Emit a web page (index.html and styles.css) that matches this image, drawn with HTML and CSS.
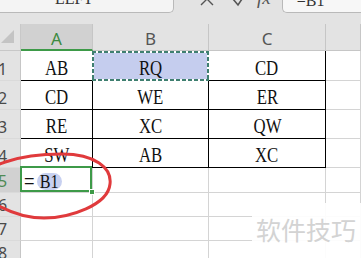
FILE: index.html
```html
<!DOCTYPE html>
<html lang="zh">
<head>
    <meta charset="UTF-8">
    <title>表格</title>
    <link rel="stylesheet" href="styles.css">
</head>
<body>
    <div class="formula-bar">
        <div class="name-box">LEFT</div>
        <svg class="ico-x" width="14" height="14" viewBox="0 0 14 14">
            <path d="M1 1 L13 13 M13 1 L1 13" stroke="#555" stroke-width="1.4" fill="none"/>
        </svg>
        <svg class="ico-ok" width="13" height="12" viewBox="0 0 13 12">
            <path d="M1 4 L6 10 L12 1" stroke="#555" stroke-width="1.6" fill="none"/>
        </svg>
        <span class="fx">fx</span>
        <div class="formula-input">=B1</div>
    </div>

    <div class="sheet">
        <div class="corner">
            <svg width="14" height="14" viewBox="0 0 14 14"><path d="M13 0 L13 13 L0 13 Z" fill="#c4c4c4"/></svg>
        </div>
        <div class="col-head active">A</div>
        <div class="col-head">B</div>
        <div class="col-head">C</div>
        <div class="col-head"></div>

        <div class="row-head"><span>1</span></div>
        <div class="cell data"><span>AB</span></div>
        <div class="cell data copy"><span>RQ</span></div>
        <div class="cell data"><span>CD</span></div>
        <div class="cell"></div>

        <div class="row-head"><span>2</span></div>
        <div class="cell data"><span>CD</span></div>
        <div class="cell data"><span>WE</span></div>
        <div class="cell data"><span>ER</span></div>
        <div class="cell"></div>

        <div class="row-head"><span>3</span></div>
        <div class="cell data"><span>RE</span></div>
        <div class="cell data"><span>XC</span></div>
        <div class="cell data"><span>QW</span></div>
        <div class="cell"></div>

        <div class="row-head"><span>4</span></div>
        <div class="cell data"><span>SW</span></div>
        <div class="cell data"><span>AB</span></div>
        <div class="cell data"><span>XC</span></div>
        <div class="cell"></div>

        <div class="row-head active"><span>5</span></div>
        <div class="cell editing">
            <span class="eq">=</span>
            <span class="ref"><span>B1</span></span>
        </div>
        <div class="cell"></div>
        <div class="cell"></div>
        <div class="cell"></div>

        <div class="row-head"><span>6</span></div>
        <div class="cell"></div>
        <div class="cell"></div>
        <div class="cell"></div>
        <div class="cell"></div>

        <div class="row-head"><span>7</span></div>
        <div class="cell"></div>
        <div class="cell"></div>
        <div class="cell"></div>
        <div class="cell"></div>

        <div class="row-head"><span>8</span></div>
        <div class="cell"></div>
        <div class="cell"></div>
        <div class="cell"></div>
        <div class="cell"></div>
    </div>

    <!-- 红色圈注 -->
    <svg class="mark" width="361" height="258" viewBox="0 0 361 258">
        <path d="M-20 185 C-20 165 20 154 62 154 C95 154 112 168 110 184 C108 205 70 218 44 218 C15 218 -20 200 -20 185 Z"
              fill="none" stroke="#e03a3c" stroke-width="3"/>
    </svg>

    <div class="watermark">软件技巧</div>
</body>
</html>
```

FILE: styles.css
```css
body {
    margin: 0;
    width: 361px;
    height: 258px;
    overflow: hidden;
    position: relative;
    background-color: #fff;
    font-family: "Noto Sans", "Liberation Sans", sans-serif;
}

/* 编辑栏 */
.formula-bar {
    display: flex;
    align-items: flex-start;
    height: 24px;
    overflow: hidden;
    background-color: #e3e3e3;
}
.name-box {
    box-sizing: border-box;
    width: 174px;
    height: 29px;
    margin-top: -16px;
    padding: 0 25px 5px 0;
    display: flex;
    align-items: flex-end;
    justify-content: center;
    background-color: #f4f4f4;
    border: 1px solid #b9b9b9;
    border-top: none;
    border-left: none;
    border-bottom-right-radius: 5px;
    font: 16px/16px "Liberation Serif", serif;
    color: #333;
}
.ico-x {
    margin: -8px 0 0 26px;
}
.ico-ok {
    margin: -5px 0 0 18px;
}
.fx {
    margin: -12px 0 0 12px;
    font: italic 19px/19px "Liberation Serif", serif;
    color: #555;
}
.formula-input {
    box-sizing: border-box;
    flex: 1;
    height: 29px;
    margin: -16px 0 0 11px;
    padding: 0 0 3px 14px;
    display: flex;
    align-items: flex-end;
    background-color: #f7f7f7;
    border: 1px solid #b9b9b9;
    border-top: none;
    border-right: none;
    border-bottom-left-radius: 5px;
    font: 16px/16px "Liberation Serif", serif;
    color: #333;
}

/* 表格 */
.sheet {
    display: grid;
    grid-template-columns: 21px 72px 116px 117px 1fr;
    grid-template-rows: 27px 30px 29px 29px 29px 25px 24px 24px 24px;
}
.sheet > div {
    box-sizing: border-box;
    display: flex;
    align-items: flex-end;
    justify-content: center;
    border-right: 1px solid #d4d4d4;
    border-bottom: 1px solid #d4d4d4;
}
.sheet > .corner {
    background-color: #e3e3e3;
    padding: 0 0 6px 1px;
    justify-content: flex-start;
    border-right-color: #c8c8c8;
    border-bottom-color: #c8c8c8;
}
.sheet > .col-head {
    background-color: #e3e3e3;
    border-right-color: #c6c6c6;
    border-bottom-color: #c6c6c6;
    padding-bottom: 3px;
    font-size: 17px;
    line-height: 17px;
    color: #555;
}
.sheet > .col-head.active {
    background-color: #d1d1d1;
    color: #3c8a40;
    border-bottom: 2px solid #3d9a48;
    padding-bottom: 2px;
}
.sheet > .row-head {
    background-color: #e3e3e3;
    border-right-color: #c6c6c6;
    border-bottom-color: #dadada;
    justify-content: flex-start;
    padding-bottom: 3px;
    font-size: 16px;
    line-height: 16px;
    color: #4a4a4a;
}
.row-head span {
    margin-left: -2px;
}
.sheet > .row-head.active {
    background-color: #d1d1d1;
    color: #4f8a55;
}

.sheet > .cell {
    padding-bottom: 2px;
    font-family: "Liberation Serif", "Times New Roman", serif;
    font-size: 21px;
    line-height: 20px;
    color: #111;
}
.cell span {
    display: inline-block;
    transform: scaleX(0.8);
}
.sheet > .data {
    border-right-color: #000;
    border-bottom-color: #000;
}

/* 复制框（虚线） */
.sheet > .copy {
    margin-left: -1px;
    border: 2px solid transparent;
    background:
        repeating-linear-gradient(90deg, #3f7f70 0 4px, #fff 4px 6px) top left / 100% 2px no-repeat,
        repeating-linear-gradient(90deg, #3f7f70 0 4px, #fff 4px 6px) bottom left / 100% 2px no-repeat,
        repeating-linear-gradient(180deg, #3f7f70 0 4px, #fff 4px 6px) top left / 2px 100% no-repeat,
        repeating-linear-gradient(180deg, #3f7f70 0 4px, #fff 4px 6px) top right / 2px 100% no-repeat,
        #c5cdee;
    background-origin: border-box;
    padding-bottom: 1px;
}

/* 正在编辑的单元格 */
.sheet > .editing {
    position: relative;
    justify-content: flex-start;
    padding: 0 0 2px 3px;
}
.editing::after {
    content: '';
    position: absolute;
    top: -2px;
    left: -1px;
    right: 0;
    bottom: 0;
    border: 2px solid #3d9a48;
}
.editing::before {
    content: '';
    position: absolute;
    right: -3px;
    bottom: -3px;
    width: 4px;
    height: 4px;
    background-color: #3d9a48;
    border: 1px solid #fff;
    z-index: 1;
}
.cell .eq {
    transform: none;
    font: 18px/17px "Liberation Sans", sans-serif;
}
.cell .ref {
    transform: none;
    width: 25px;
    height: 17px;
    margin-left: 2px;
    border-radius: 9px;
    background-color: #c7d0f0;
    text-align: center;
    font-size: 19px;
    line-height: 17px;
}
.ref span {
    transform: scaleX(0.85);
}

/* 覆盖层 */
.mark {
    position: absolute;
    left: 0;
    top: 0;
    pointer-events: none;
}
.watermark {
    position: absolute;
    right: 0;
    bottom: 0;
    width: 109px;
    height: 55px;
    box-sizing: border-box;
    padding: 14px 0 0 4px;
    background-color: rgba(255, 255, 255, 0.92);
    font: 25px/25px "Noto Sans CJK SC", sans-serif;
    color: #d3d3d3;
}
```
